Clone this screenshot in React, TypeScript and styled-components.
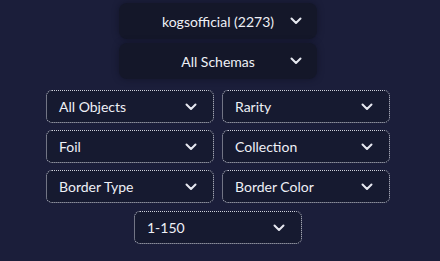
import React from "react";
import styled, { createGlobalStyle } from "styled-components";

const GlobalStyle = createGlobalStyle`
  body {
    margin: 0;
    background: #1b1e3a;
    font-family: Lato, "Open Sans", sans-serif;
  }
`;

const Page = styled.div`
  width: 436px;
  height: 261px;
  display: flex;
  flex-direction: column;
  align-items: center;
  padding-top: 3px;
  box-sizing: border-box;
`;

const TopStack = styled.div`
  display: flex;
  flex-direction: column;
  gap: 4px;
`;

const TopSelect = styled.div`
  position: relative;
  width: 198px;
  height: 36px;
  background: #141729;
  border-radius: 8px;
  box-shadow: 0 0 6px rgba(10, 12, 25, 0.5);
  display: flex;
  align-items: center;
  justify-content: center;
  color: #eef0f6;
  font-size: 14px;
`;

const TopChevron = styled.span`
  position: absolute;
  right: 15px;
  top: 50%;
  transform: translateY(-50%);
  display: flex;
`;

const FilterGrid = styled.div`
  margin-top: 11px;
  display: grid;
  grid-template-columns: 168px 168px;
  column-gap: 8px;
  row-gap: 7px;
`;

const Select = styled.div`
  width: 168px;
  height: 33px;
  box-sizing: border-box;
  border: 1px dotted #cdd0da;
  border-radius: 6px;
  background: #161a30;
  display: flex;
  align-items: center;
  justify-content: space-between;
  padding: 0 16px 0 12px;
  color: #eef0f6;
  font-size: 14px;
`;

const PageSelect = styled(Select)`
  margin-top: 8px;
`;

const Chevron = () => (
  <svg width="12" height="8" viewBox="0 0 12 8">
    <path d="M1.5 1.5 L6 6 L10.5 1.5" fill="none" stroke="#e6e8f0" strokeWidth="2" strokeLinecap="round" strokeLinejoin="round" />
  </svg>
);

const filters = ["All Objects", "Rarity", "Foil", "Collection", "Border Type", "Border Color"];

export default function App() {
  return (
    <>
      <GlobalStyle />
      <Page>
        <TopStack>
          <TopSelect>
            kogsofficial (2273)
            <TopChevron><Chevron /></TopChevron>
          </TopSelect>
          <TopSelect>
            All Schemas
            <TopChevron><Chevron /></TopChevron>
          </TopSelect>
        </TopStack>
        <FilterGrid>
          {filters.map((f) => (
            <Select key={f}>
              <span>{f}</span>
              <Chevron />
            </Select>
          ))}
        </FilterGrid>
        <PageSelect>
          <span>1-150</span>
          <Chevron />
        </PageSelect>
      </Page>
    </>
  );
}
